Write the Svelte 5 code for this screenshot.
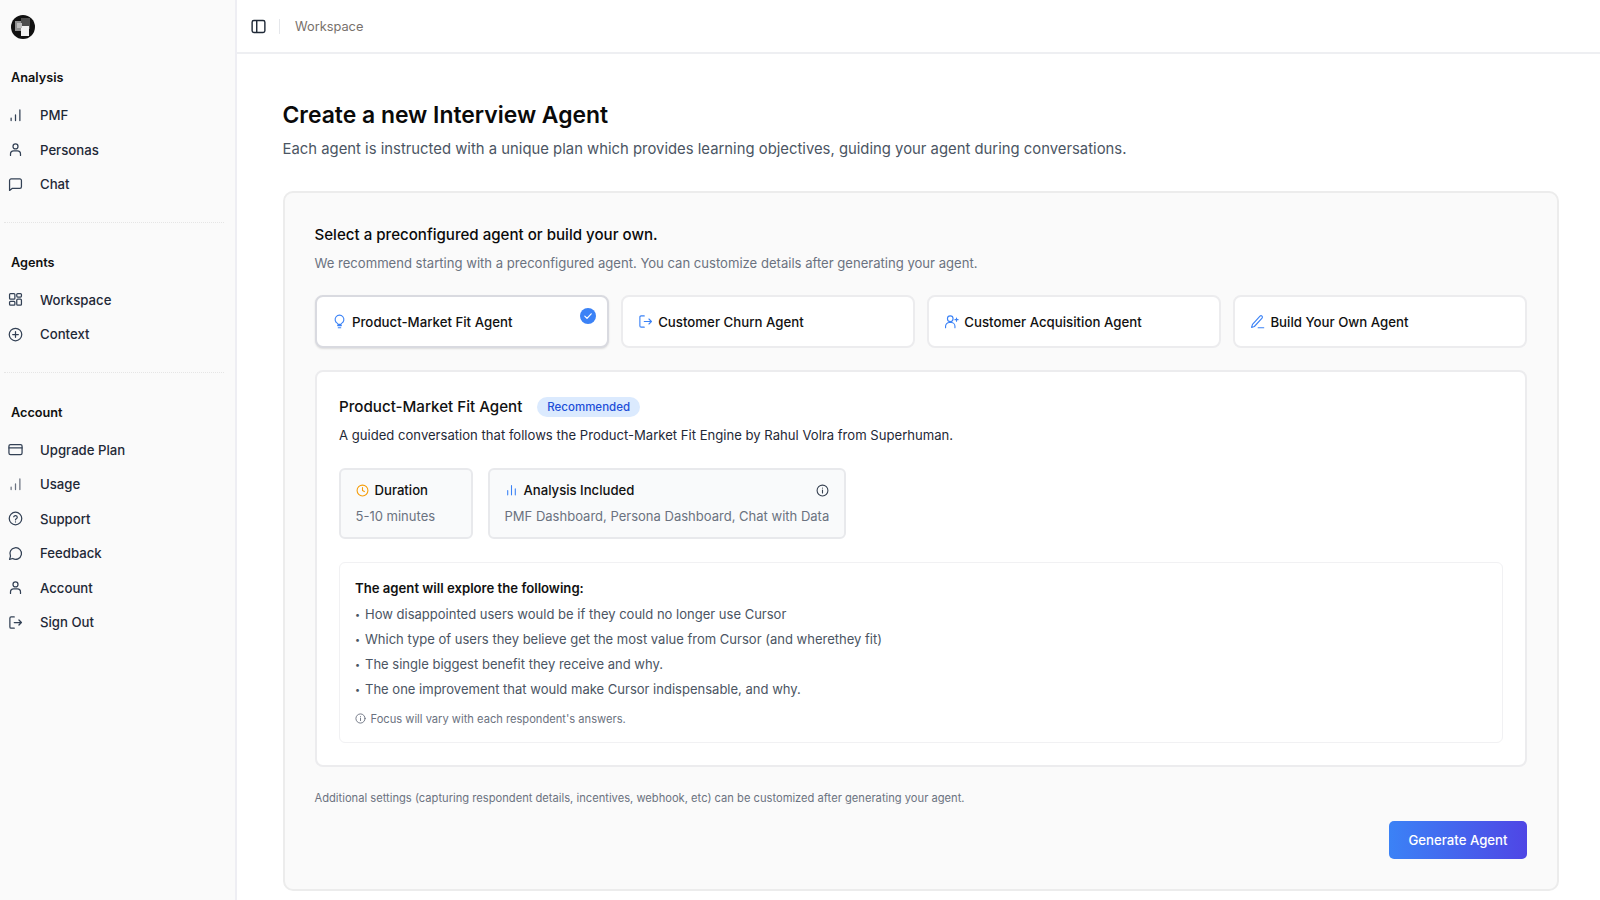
<script>
  const icons = {
    bars: '<path d="M5 20v-4M12 20v-9M19 20V3"/>',
    barsMid: '<path d="M5 20v-8M12 20V3M19 20v-11"/>',
    user: '<circle cx="12" cy="7" r="4"/><path d="M4 21.500V19a5 5 0 0 1 5-5h6a5 5 0 0 1 5 5v2.500"/>',
    chat: '<path d="M2.500 5.500a2.500 2.500 0 0 1 2.500-2.500h14a2.500 2.500 0 0 1 2.500 2.500v10a2.500 2.500 0 0 1-2.500 2.500H7L2.500 21.500z"/>',
    grid: '<rect x="2.500" y="2.500" width="8.500" height="9" rx="1.500"/><rect x="14" y="2.500" width="7.500" height="5.500" rx="1.500"/><rect x="14" y="11.500" width="7.500" height="9.500" rx="1.500"/><rect x="2.500" y="15" width="8.500" height="6" rx="1.500"/>',
    plus: '<circle cx="12" cy="12" r="10"/><path d="M12 7.500v9M7.500 12h9"/>',
    card: '<rect x="1.500" y="4" width="21" height="16" rx="2.500"/><path d="M1.500 9.500h21"/>',
    help: '<circle cx="12" cy="12" r="10"/><path d="M9.200 9.200a2.900 2.900 0 0 1 5.600 1c0 2-2.800 2.400-2.800 4M12 17.400v.1"/>',
    bubble: '<path d="M7.500 20A9.300 9.300 0 1 0 4 16.200L2.500 21.500z"/>',
    logout: '<path d="M10 3H5a2 2 0 0 0-2 2v14a2 2 0 0 0 2 2h5M10 12h11.500M17.500 8l4 4-4 4"/>',
    bulb: '<path d="M9 18.500h6M10 22h4M8.700 15a7 7 0 1 1 6.600 0c-.5.400-.8.900-.8 1.500h-5c0-.6-.3-1.100-.8-1.500z"/>',
    useradd: '<circle cx="10" cy="7.500" r="4.500"/><path d="M2.500 22v-2.500a6 6 0 0 1 6-6h3a6 6 0 0 1 6 6V22M20 6.500v5M17.500 9h5"/>',
    pen: '<path d="M4 16.500 16 3.500a2.300 2.300 0 0 1 3.300 3.200L7 20l-4.500 1.500zM13 22h9"/>',
    clock: '<circle cx="12" cy="12" r="10"/><path d="M12 6.500V12l3.500 2"/>',
    info: '<circle cx="12" cy="12" r="10"/><path d="M12 11v5.500M12 7.500v.1"/>'
  };

  const sections = [
    { title: 'Analysis', items: [['bars', 'PMF'], ['user', 'Personas'], ['chat', 'Chat']] },
    { title: 'Agents', items: [['grid', 'Workspace'], ['plus', 'Context']] },
    { title: 'Account', items: [['card', 'Upgrade Plan'], ['bars', 'Usage'], ['help', 'Support'], ['bubble', 'Feedback'], ['user', 'Account'], ['logout', 'Sign Out']] }
  ];

  const agents = [
    ['bulb', 'Product-Market Fit Agent'],
    ['logout', 'Customer Churn Agent'],
    ['useradd', 'Customer Acquisition Agent'],
    ['pen', 'Build Your Own Agent']
  ];

  const topics = [
    'How disappointed users would be if they could no longer use Cursor',
    'Which type of users they believe get the most value from Cursor (and wherethey fit)',
    'The single biggest benefit they receive and why.',
    'The one improvement that would make Cursor indispensable, and why.'
  ];
</script>

{#snippet icon(name, cls)}
  <svg class={cls} viewBox="0 0 24 24" fill="none" stroke="currentColor" stroke-width="2" stroke-linecap="round" stroke-linejoin="round">{@html icons[name]}</svg>
{/snippet}

<div class="app">
  <aside class="sidebar">
    <div class="logo">
      <svg viewBox="0 0 24 24" width="24" height="24">
        <circle cx="12" cy="12" r="12" fill="#111" />
        <rect x="4" y="6" width="10" height="10" fill="#8f8f8f" />
        <rect x="10" y="3" width="9" height="11" fill="#4d4d4d" />
        <rect x="10" y="11" width="8" height="10" fill="#f2f2f2" />
        <rect x="6" y="8" width="5" height="5" fill="#bdbdbd" />
      </svg>
    </div>
    {#each sections as section, i}
      {#if i > 0}<div class="rule"></div>{/if}
      <h4>{section.title}</h4>
      <nav>
        {#each section.items as [ic, label]}
          <div class="nav-item" class:muted={label === 'Usage'}>
            {@render icon(ic, 'nav-icon')}
            <span>{label}</span>
          </div>
        {/each}
      </nav>
    {/each}
  </aside>

  <main>
    <header>
      <svg class="toggle" viewBox="0 0 24 24" fill="none" stroke="currentColor" stroke-width="2" stroke-linejoin="round"><rect x="3" y="3.500" width="18" height="17" rx="2.500"/><path d="M9.500 3.500v17"/></svg>
      <div class="sep"></div>
      <span class="crumb">Workspace</span>
    </header>

    <div class="content">
      <h1>Create a new Interview Agent</h1>
      <p class="lead">Each agent is instructed with a unique plan which provides learning objectives, guiding your agent during conversations.</p>

      <section class="panel">
        <h2>Select a preconfigured agent or build your own.</h2>
        <p class="hint">We recommend starting with a preconfigured agent. You can customize details after generating your agent.</p>

        <div class="agents">
          {#each agents as [ic, label], i}
            <div class="agent" class:selected={i === 0}>
              {@render icon(ic, 'agent-icon')}
              <span>{label}</span>
              {#if i === 0}
                <svg class="check" viewBox="0 0 16 16"><circle cx="8" cy="8" r="8" fill="#3b82f6"/><path d="M4.800 8.200 7 10.400l4.200-4.600" fill="none" stroke="#fff" stroke-width="1.200" stroke-linecap="round" stroke-linejoin="round"/></svg>
              {/if}
            </div>
          {/each}
        </div>

        <div class="detail">
          <div class="detail-head">
            <h3>Product-Market Fit Agent</h3>
            <span class="badge">Recommended</span>
          </div>
          <p class="desc">A guided conversation that follows the Product-Market Fit Engine by Rahul Volra from Superhuman.</p>

          <div class="facts">
            <div class="fact duration">
              <div class="fact-head">
                {@render icon('clock', 'fact-icon orange')}
                <span>Duration</span>
              </div>
              <div class="fact-body">5-10 minutes</div>
            </div>
            <div class="fact">
              <div class="fact-head">
                {@render icon('barsMid', 'fact-icon blue')}
                <span>Analysis Included</span>
                {@render icon('info', 'fact-info')}
              </div>
              <div class="fact-body">PMF Dashboard, Persona Dashboard, Chat with Data</div>
            </div>
          </div>

          <div class="explore">
            <h5>The agent will explore the following:</h5>
            <ul>
              {#each topics as topic}
                <li><span class="dot">•</span><span>{topic}</span></li>
              {/each}
            </ul>
            <div class="focus">
              {@render icon('info', 'focus-icon')}
              <span>Focus will vary with each respondent's answers.</span>
            </div>
          </div>
        </div>

        <p class="note">Additional settings (capturing respondent details, incentives, webhook, etc) can be customized after generating your agent.</p>
        <div class="actions">
          <button>Generate Agent</button>
        </div>
      </section>
    </div>
  </main>
</div>

<style>
  :global(body) {
    margin: 0;
    font-family: Inter, "Liberation Sans", sans-serif;
    background: #fff;
    overflow: hidden;
  }

  .app {
    display: flex;
    width: 1600px;
    height: 900px;
    overflow: hidden;
  }

  .sidebar {
    width: 237px;
    flex: none;
    box-sizing: border-box;
    background: #fafafa;
    border-right: 2px solid #eeeef3;
    padding: 15px 11px 0 4px;
  }

  .logo {
    height: 23px;
    padding-left: 7px;
    margin-bottom: 31px;
  }

  .logo svg {
    display: block;
  }

  h4 {
    margin: 0 0 11px 7px;
    font-size: 12.700px;
    line-height: 18px;
    font-weight: 600;
    color: #111;
  }

  .nav-item {
    display: flex;
    align-items: center;
    height: 34.500px;
    color: #1f2937;
    font-size: 13.200px;
    font-weight: 500;
  }

  .nav-icon {
    width: 15px;
    height: 15px;
    margin-left: 3.500px;
    margin-right: 17.500px;
    color: #334155;
  }

  .nav-item.muted .nav-icon {
    color: #6b7280;
  }

  .rule {
    height: 0;
    border-top: 1px dotted #e5e5e5;
    margin: 20px 0 31px;
  }

  main {
    flex: 1;
    min-width: 0;
  }

  header {
    height: 52px;
    display: flex;
    align-items: center;
    border-bottom: 2px solid #eeeff2;
    padding-left: 13px;
  }

  .toggle {
    width: 17px;
    height: 17px;
    color: #1f2937;
  }

  .sep {
    width: 1px;
    height: 15px;
    background: #e5e7eb;
    margin: 0 15px 0 12px;
  }

  .crumb {
    font-size: 12.800px;
    color: #78716c;
  }

  .content {
    padding: 46px 41px 0 45.500px;
  }

  h1 {
    margin: 0;
    font-size: 22.900px;
    line-height: 30px;
    font-weight: 600;
    color: #0a0a0a;
  }

  .lead {
    margin: 7px 0 0;
    font-size: 14.850px;
    line-height: 24px;
    color: #4b5563;
  }

  .panel {
    margin-top: 30px;
    height: 700px;
    box-sizing: border-box;
    background: #fafafa;
    border: 2px solid #ececec;
    border-radius: 10px;
    padding: 30px 30px 0;
  }

  h2 {
    margin: 0;
    font-size: 15.100px;
    line-height: 24px;
    font-weight: 500;
    color: #0a0a0a;
  }

  .hint {
    margin: 6px 0 0;
    font-size: 13.080px;
    line-height: 20px;
    color: #6b7280;
  }

  .agents {
    display: grid;
    grid-template-columns: repeat(4, 1fr);
    gap: 12px;
    margin-top: 22px;
  }

  .agent {
    position: relative;
    height: 53px;
    box-sizing: border-box;
    display: flex;
    align-items: center;
    gap: 5.500px;
    padding-left: 15px;
    background: #fff;
    border: 2px solid #ececee;
    border-radius: 8px;
    font-size: 13.250px;
    font-weight: 500;
    color: #111;
  }

  .agent.selected {
    border-color: #d9dae0;
    box-shadow: 0 1px 2px rgba(0, 0, 0, 0.12);
  }

  .agent-icon {
    width: 15px;
    height: 15px;
    color: #3b82f6;
    stroke-width: 1.800;
  }

  .check {
    position: absolute;
    top: 10.500px;
    right: 11px;
    width: 16px;
    height: 16px;
  }

  .detail {
    margin-top: 22px;
    height: 397px;
    box-sizing: border-box;
    background: #fff;
    border: 2px solid #ececee;
    border-radius: 8px;
    padding: 24px 22.500px 0;
  }

  .detail-head {
    display: flex;
    align-items: center;
    gap: 15px;
  }

  h3 {
    margin: 0;
    font-size: 15.150px;
    line-height: 22px;
    font-weight: 500;
    color: #111;
  }

  .badge {
    height: 20px;
    line-height: 20px;
    padding: 0 10px;
    border-radius: 10px;
    background: #dbeafe;
    color: #1d4ed8;
    font-size: 11.500px;
    font-weight: 500;
  }

  .desc {
    margin: 7px 0 0;
    font-size: 13.100px;
    line-height: 20px;
    color: #1f2937;
  }

  .facts {
    display: flex;
    gap: 15px;
    margin-top: 23px;
  }

  .fact {
    box-sizing: border-box;
    height: 71px;
    padding: 10px 14.500px 0;
    background: #f9fafb;
    border: 2px solid #e8e9ec;
    border-radius: 6px;
  }

  .fact.duration {
    width: 134px;
  }

  .fact-head {
    display: flex;
    align-items: center;
    gap: 6px;
    height: 20px;
    font-size: 13.150px;
    font-weight: 500;
    color: #111;
  }

  .fact-icon {
    width: 13px;
    height: 13px;
  }

  .orange { color: #f59e0b; }
  .blue { color: #3b82f6; }

  .fact-info {
    width: 13px;
    height: 13px;
    margin-left: auto;
    color: #374151;
  }

  .fact-body {
    margin-top: 6px;
    font-size: 13.030px;
    line-height: 20px;
    color: #6b7280;
  }

  .explore {
    margin-top: 23px;
    height: 181px;
    box-sizing: border-box;
    border: 1px solid #f1f1f3;
    border-radius: 6px;
    padding: 15px 15px 0;
  }

  h5 {
    margin: 0;
    font-size: 13.150px;
    line-height: 20px;
    font-weight: 600;
    color: #111;
  }

  ul {
    list-style: none;
    margin: 4px 0 0;
    padding: 0;
  }

  li {
    display: flex;
    font-size: 13.030px;
    line-height: 25px;
    color: #4b5563;
  }

  .dot {
    width: 10px;
    font-size: 9px;
  }

  .focus {
    display: flex;
    align-items: center;
    gap: 4.500px;
    margin-top: 7.500px;
    font-size: 11.150px;
    line-height: 18px;
    color: #6b7280;
  }

  .focus-icon {
    width: 11px;
    height: 11px;
  }

  .note {
    margin: 22px 0 0;
    font-size: 11.170px;
    line-height: 18px;
    color: #6b7280;
  }

  .actions {
    display: flex;
    justify-content: flex-end;
    margin-top: 14px;
  }

  button {
    width: 138px;
    height: 38px;
    padding-bottom: 2px;
    border: 0;
    border-radius: 5px;
    background: linear-gradient(90deg, #3b82f6, #4f46e5);
    color: #fff;
    font: 500 13.200px Inter, "Liberation Sans", sans-serif;
  }
</style>
